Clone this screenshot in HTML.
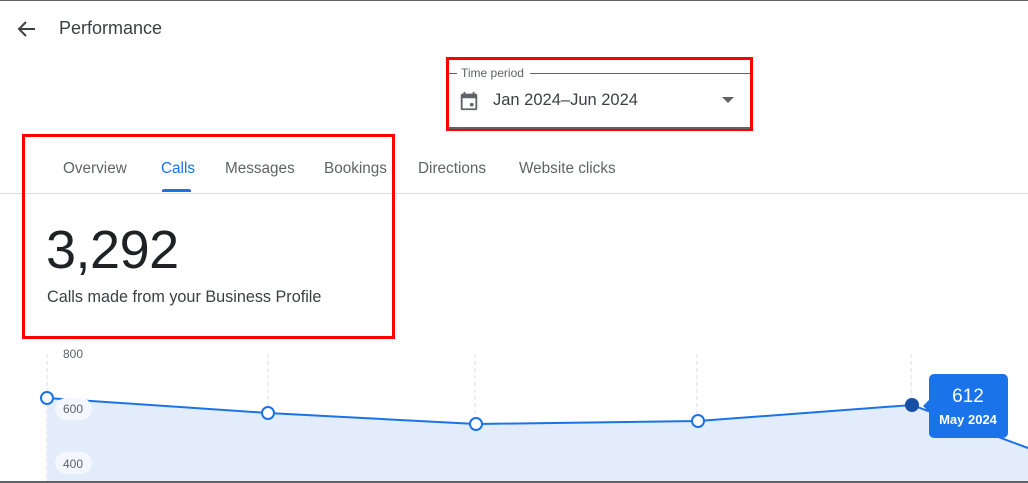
<!DOCTYPE html>
<html><head><meta charset="utf-8"><style>
*{margin:0;padding:0;box-sizing:border-box}
body{width:1028px;height:483px;overflow:hidden;background:#fff;font-family:"Liberation Sans",sans-serif;position:relative;color:#3c4043}
.abs{position:absolute}
.tab{position:absolute;top:160px;font-size:15.3px;color:#5f6368}
</style></head><body>
<div class="abs" style="left:0;top:0;width:1028px;height:1px;background:#5f6368"></div>
<svg class="abs" style="left:16px;top:19px" width="22" height="20" viewBox="0 0 22 20"><path d="M19 10H4M10 3L3 10l7 7" stroke="#3c4043" stroke-width="2" fill="none"/></svg>
<div class="abs" style="left:59px;top:18px;font-size:18px;color:#3c4043">Performance</div>

<div class="abs" style="left:446px;top:57px;width:307px;height:74px;border:3px solid #f00"></div>
<div class="abs" style="left:449px;top:73px;width:8px;height:1px;background:#5f6368"></div>
<div class="abs" style="left:461px;top:66px;font-size:12px;color:#5f6368">Time period</div>
<div class="abs" style="left:530px;top:73px;width:220px;height:1px;background:#5f6368"></div>
<div class="abs" style="left:449px;top:127px;width:301px;height:2px;background:#5f6368"></div>
<svg class="abs" style="left:458px;top:90px" width="22" height="22" viewBox="0 0 24 24"><path fill="#5f6368" d="M19 4h-1V2h-2v2H8V2H6v2H5a2 2 0 0 0-2 2v14a2 2 0 0 0 2 2h14a2 2 0 0 0 2-2V6a2 2 0 0 0-2-2zm0 16H5V9h14v11z"/><circle cx="15" cy="16" r="2" fill="#5f6368"/></svg>
<div class="abs" style="left:493px;top:91px;font-size:16.5px;color:#3c4043">Jan 2024–Jun 2024</div>
<svg class="abs" style="left:722px;top:97px" width="12" height="7"><path d="M0 0h12L6 6z" fill="#5f6368"/></svg>

<div class="tab" style="left:63px">Overview</div>
<div class="tab" style="left:161px;color:#1a73e8">Calls</div>
<div class="abs" style="left:162px;top:189px;width:29px;height:3px;background:#1a73e8;border-radius:2px 2px 0 0"></div>
<div class="tab" style="left:225px">Messages</div>
<div class="tab" style="left:324px">Bookings</div>
<div class="tab" style="left:418px">Directions</div>
<div class="tab" style="left:519px">Website clicks</div>
<div class="abs" style="left:0;top:193px;width:1028px;height:1px;background:#dadce0"></div>

<div class="abs" style="left:22px;top:134px;width:373px;height:205px;border:3px solid #f00"></div>
<div class="abs" style="left:46px;top:219px;font-size:54px;color:#202124;letter-spacing:-0.5px">3,292</div>
<div class="abs" style="left:47px;top:288px;font-size:16.2px;color:#3c4043">Calls made from your Business Profile</div>

<svg class="abs" style="left:0;top:340px" width="1028" height="143">
<g stroke="#dadce0" stroke-dasharray="4,3" stroke-width="1">
<line x1="47" y1="14" x2="47" y2="143"/><line x1="268" y1="14" x2="268" y2="143"/><line x1="475" y1="14" x2="475" y2="143"/><line x1="697" y1="14" x2="697" y2="143"/><line x1="911" y1="14" x2="911" y2="143"/></g>
<path d="M47 58L268 73L476 84L698 81L912 65L1028 108V143H47Z" fill="#e3ecfb"/>
<path d="M47 58L268 73L476 84L698 81L912 65L1028 108" stroke="#1a73e8" stroke-width="2" fill="none"/>
<rect x="55" y="58" width="37" height="22" rx="11" fill="#f4f7fd"/>
<rect x="55" y="112" width="37" height="22" rx="11" fill="#f4f7fd"/>
<text x="63" y="18" font-size="12" fill="#5f6368" font-family="Liberation Sans">800</text>
<text x="63" y="73" font-size="12" fill="#5f6368" font-family="Liberation Sans">600</text>
<text x="63" y="128" font-size="12" fill="#5f6368" font-family="Liberation Sans">400</text>
<g fill="#fff" stroke="#1a73e8" stroke-width="2">
<circle cx="47" cy="58" r="6"/><circle cx="268" cy="73" r="6"/><circle cx="476" cy="84" r="6"/><circle cx="698" cy="81" r="6"/></g>
<circle cx="912" cy="65" r="7" fill="#174ea6"/>
<rect x="929" y="34" width="79" height="64" rx="5" fill="#1a73e8"/>
<path d="M929 60L923 66L929 72Z" fill="#1a73e8"/>
<text x="968" y="62" font-size="19" fill="#fff" text-anchor="middle" font-family="Liberation Sans">612</text>
<text x="968" y="84" font-size="13" fill="#fff" text-anchor="middle" font-weight="bold" font-family="Liberation Sans">May 2024</text>
</svg>
<div class="abs" style="left:0;top:481px;width:1028px;height:2px;background:#5f6368"></div>
</body></html>
